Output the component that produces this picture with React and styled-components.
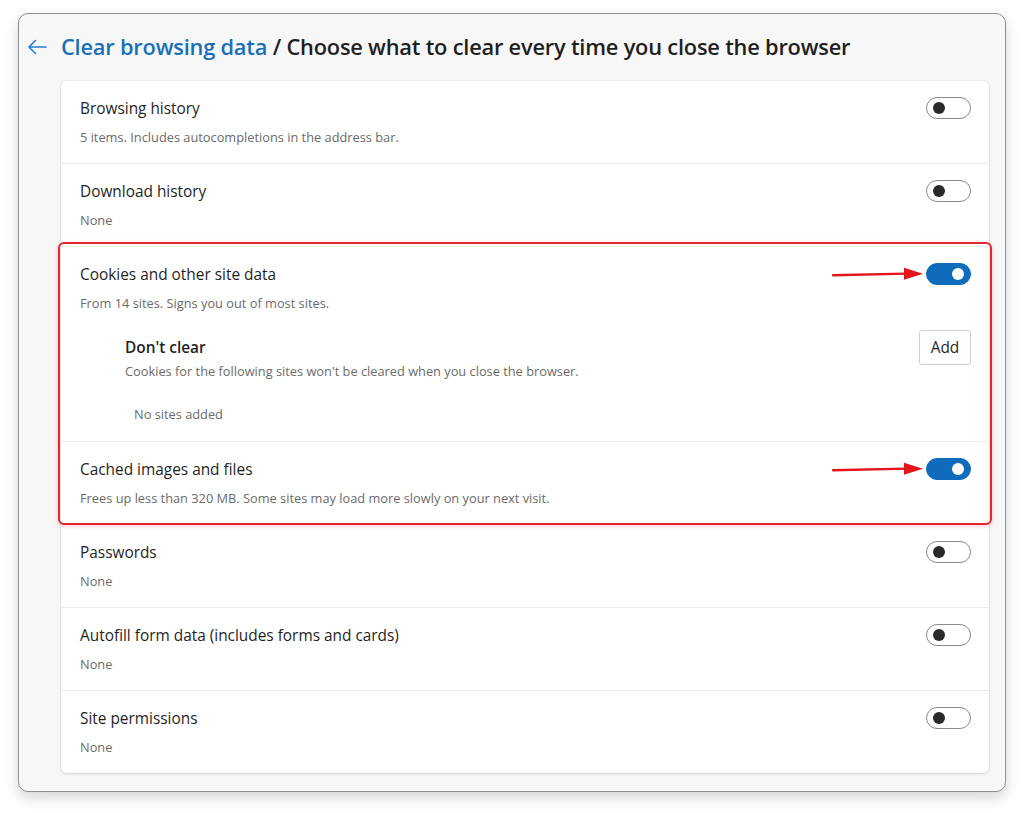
import React from "react";
import styled, { createGlobalStyle } from "styled-components";

const GlobalStyle = createGlobalStyle`
  body {
    margin: 0;
    background: #ffffff;
    font-family: "Open Sans", "Noto Sans", sans-serif;
    color: #1f1f1f;
  }
`;

export default function App() {
  return (
    <>
      <GlobalStyle />
      <Page>
        <Window>
          <Header>
            <BackButton aria-label="Back">
              <svg width="20" height="16" viewBox="0 0 20 16" fill="none">
                <path d="M19 8H2M8.5 1.5L2 8l6.5 6.5" stroke="#2b7cd3" strokeWidth="1.6" strokeLinecap="round" strokeLinejoin="round" />
              </svg>
            </BackButton>
            <Title>
              <Crumb>Clear browsing data</Crumb> / Choose what to clear every time you close the browser
            </Title>
          </Header>
          <Card>
            <Row>
              <RowHead>
                <RowTitle>Browsing history</RowTitle>
                <Toggle />
              </RowHead>
              <RowSub>5 items. Includes autocompletions in the address bar.</RowSub>
            </Row>
            <Row>
              <RowHead>
                <RowTitle>Download history</RowTitle>
                <Toggle />
              </RowHead>
              <RowSub>None</RowSub>
            </Row>
            <Highlight>
              <Row>
                <RowHead>
                  <RowTitle>Cookies and other site data</RowTitle>
                  <Control>
                    <Arrow />
                    <Toggle on />
                  </Control>
                </RowHead>
                <RowSub>From 14 sites. Signs you out of most sites.</RowSub>
                <SubSection>
                  <SubHead>
                    <SubTitle>Don't clear</SubTitle>
                    <AddButton>Add</AddButton>
                  </SubHead>
                  <SubText>Cookies for the following sites won't be cleared when you close the browser.</SubText>
                  <Empty>No sites added</Empty>
                </SubSection>
              </Row>
              <Row>
                <RowHead>
                  <RowTitle>Cached images and files</RowTitle>
                  <Control>
                    <Arrow />
                    <Toggle on />
                  </Control>
                </RowHead>
                <RowSub>Frees up less than 320 MB. Some sites may load more slowly on your next visit.</RowSub>
              </Row>
            </Highlight>
            <Row>
              <RowHead>
                <RowTitle>Passwords</RowTitle>
                <Toggle />
              </RowHead>
              <RowSub>None</RowSub>
            </Row>
            <Row>
              <RowHead>
                <RowTitle>Autofill form data (includes forms and cards)</RowTitle>
                <Toggle />
              </RowHead>
              <RowSub>None</RowSub>
            </Row>
            <Row>
              <RowHead>
                <RowTitle>Site permissions</RowTitle>
                <Toggle />
              </RowHead>
              <RowSub>None</RowSub>
            </Row>
          </Card>
        </Window>
      </Page>
    </>
  );
}

function Toggle({ on }) {
  return (
    <Switch $on={on}>
      <Knob $on={on} />
    </Switch>
  );
}

function Arrow() {
  return (
    <svg width="92" height="14" viewBox="0 0 92 14" fill="none">
      <path d="M1 8.2L74 6.6" stroke="#e3141b" strokeWidth="2.4" strokeLinecap="round" />
      <path d="M72 0.8L91 6.7L72 12.8Z" fill="#e3141b" />
    </svg>
  );
}

const Page = styled.div`
  padding: 13px 18px 23px;
`;

const Window = styled.div`
  width: 988px;
  box-sizing: border-box;
  background: #f7f7f7;
  border: 1px solid #8f8f8f;
  border-radius: 10px;
  box-shadow: 0 6px 14px rgba(0, 0, 0, 0.16);
  padding: 0 16px 18px 42px;
`;

const Header = styled.div`
  display: flex;
  align-items: center;
  height: 67px;
  margin-left: -34px;
`;

const BackButton = styled.div`
  width: 22px;
  display: flex;
  align-items: center;
  margin-right: 12px;
  margin-top: -2px;
`;

const Title = styled.h1`
  margin: 0;
  font-size: 21.8px;
  font-weight: 600;
  color: #1f1f1f;
  letter-spacing: -0.2px;
  margin-top: -2px;
`;

const Crumb = styled.span`
  color: #1a70b8;
`;

const Card = styled.div`
  background: #ffffff;
  border-radius: 6px;
  box-shadow: 0 1px 3px rgba(0, 0, 0, 0.12), 0 0 0 1px rgba(0, 0, 0, 0.03);
`;

const Row = styled.div`
  padding: 17px 18px 17px 19px;
  border-bottom: 1px solid #ebebeb;

  &:last-child {
    border-bottom: none;
  }
`;

const Highlight = styled.div`
  position: relative;
  border-bottom: 1px solid #ebebeb;

  &::after {
    content: "";
    position: absolute;
    top: -5px;
    bottom: -1px;
    left: -3px;
    right: -3px;
    border: 2px solid #e3262f;
    border-radius: 6px;
    box-shadow: 0 1px 4px rgba(227, 38, 47, 0.25);
    pointer-events: none;
  }
`;

const RowHead = styled.div`
  display: flex;
  align-items: center;
  justify-content: space-between;
  height: 20px;
`;

const RowTitle = styled.div`
  font-size: 15.4px;
  font-weight: 400;
  color: #1f1f1f;
`;

const RowSub = styled.div`
  margin-top: 10px;
  font-size: 12.8px;
  line-height: 18px;
  color: #6b6b6b;
`;

const Control = styled.div`
  display: flex;
  align-items: center;
  gap: 2px;
`;

const Switch = styled.div`
  width: 45px;
  height: 22px;
  box-sizing: border-box;
  border-radius: 11px;
  border: 1px solid ${(p) => (p.$on ? "#0f6cbd" : "#8a8a8a")};
  background: ${(p) => (p.$on ? "#0f6cbd" : "#ffffff")};
  display: flex;
  align-items: center;
  justify-content: ${(p) => (p.$on ? "flex-end" : "flex-start")};
  padding: 0 4px;
`;

const Knob = styled.div`
  width: 12px;
  height: 12px;
  border-radius: 50%;
  background: ${(p) => (p.$on ? "#ffffff" : "#2a2a2a")};
  margin-left: ${(p) => (p.$on ? "0" : "2px")};
  margin-right: ${(p) => (p.$on ? "2px" : "0")};
`;

const SubSection = styled.div`
  padding-left: 45px;
  margin-top: 22px;
`;

const SubHead = styled.div`
  display: flex;
  align-items: center;
  justify-content: space-between;
  height: 26px;
`;

const SubTitle = styled.div`
  font-size: 15.4px;
  font-weight: 600;
  color: #1f1f1f;
`;

const AddButton = styled.button`
  width: 52px;
  height: 35px;
  border: 1px solid #cfcfcf;
  border-radius: 3px;
  background: #ffffff;
  font-family: "Open Sans", "Noto Sans", sans-serif;
  font-size: 15.4px;
  color: #1f1f1f;
  padding: 0;
`;

const SubText = styled.div`
  margin-top: 2px;
  font-size: 12.8px;
  line-height: 18px;
  color: #6b6b6b;
`;

const Empty = styled.div`
  margin-top: 25px;
  padding-left: 9px;
  font-size: 12.8px;
  line-height: 18px;
  color: #6b6b6b;
  padding-bottom: 1px;
`;
